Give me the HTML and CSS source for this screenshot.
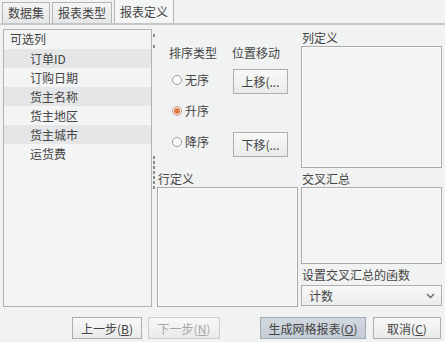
FILE: index.html
```html
<html>
<head>
    <meta charset="UTF-8">
    <title>报表定义</title>
    <link rel="stylesheet" href="styles.css">
</head>
<body>
<div class="tabs">
    <div class="tab">数据集</div>
    <div class="tab">报表类型</div>
    <div class="tab active">报表定义</div>
</div>
<div class="main">
    <div class="list">
        <div class="list-head">可选列</div>
        <div class="row alt">订单ID</div>
        <div class="row">订购日期</div>
        <div class="row alt">货主名称</div>
        <div class="row">货主地区</div>
        <div class="row alt">货主城市</div>
        <div class="row">运货费</div>
    </div>
    <div class="splitter">
        <div class="dots top"><i></i><i></i></div>
        <div class="dots bottom"><i></i><i></i><i></i><i></i><i></i><i></i><i></i></div>
    </div>
    <div class="col">
        <div class="sort-area">
            <div class="sort-col">
                <div class="head">排序类型</div>
                <div class="radios">
                    <label class="radio"><span class="dot"></span>无序</label>
                    <label class="radio"><span class="dot checked"></span>升序</label>
                    <label class="radio"><span class="dot"></span>降序</label>
                </div>
            </div>
            <div class="move-col">
                <div class="head">位置移动</div>
                <button class="btn small up">上移(...</button>
                <button class="btn small down">下移(...</button>
            </div>
        </div>
        <div class="label">行定义</div>
        <div class="box row-box"></div>
    </div>
    <div class="col right">
        <div class="label">列定义</div>
        <div class="box col-box"></div>
        <div class="label gap">交叉汇总</div>
        <div class="box cross-box"></div>
        <div class="label gap">设置交叉汇总的函数</div>
        <div class="select">
            <span>计数</span>
            <svg width="9" height="6" viewBox="0 0 9 6"><path d="M1 1 L4.5 4.5 L8 1" fill="none" stroke="#666" stroke-width="1.4"/></svg>
        </div>
    </div>
</div>
<div class="footer">
    <button class="btn">上一步(<u>B</u>)</button>
    <button class="btn disabled">下一步(<u>N</u>)</button>
    <button class="btn primary">生成网格报表(<u>O</u>)</button>
    <button class="btn cancel">取消(<u>C</u>)</button>
</div>
</body>
</html>
```
FILE: styles.css
```css
* {
    padding: 0;
    margin: 0;
    box-sizing: border-box;
}

body {
    width: 445px;
    height: 342px;
    overflow: hidden;
    background: #f1f2f2;
    font-family: "Noto Sans CJK SC", "Liberation Sans", sans-serif;
    font-size: 12px;
    color: #444;
}

.tabs {
    display: flex;
    align-items: flex-end;
    gap: 2px;
    height: 25px;
    padding-left: 2px;
    border-bottom: 2px solid #c3c7cb;
}

.tab {
    height: 21px;
    padding: 0 5px;
    line-height: 20px;
    border: 1px solid #b4b4b4;
    border-bottom: none;
    background: linear-gradient(#f5f5f5, #e5e6e6);
}

.tab.active {
    height: 24px;
    line-height: 23px;
    background: #f4f5f5;
}

.main {
    display: flex;
    height: 282px;
    padding: 4px 3px 0 3px;
}

.list {
    width: 149px;
    height: 278px;
    border: 1px solid #b2b2b2;
    background: #f3f4f4;
}

.list-head {
    height: 19px;
    line-height: 18px;
    padding-left: 6px;
}

.row {
    height: 19px;
    line-height: 19px;
    padding-left: 26px;
}

.row.alt {
    background: #e5e6e7;
}

.splitter {
    width: 5px;
    display: flex;
    flex-direction: column;
    padding-left: 1px;
}

.dots {
    display: flex;
    flex-direction: column;
}

.dots i {
    display: block;
    width: 2px;
    height: 3px;
    background: #8c8c8c;
}

.dots.top {
    margin-top: 5px;
    gap: 8px;
}

.dots.bottom {
    margin-top: 108px;
    gap: 2px;
}

.col {
    width: 141px;
    display: flex;
    flex-direction: column;
}

.col.right {
    margin-left: 3px;
}

.sort-area {
    display: flex;
    height: 141px;
    padding-left: 12px;
}

.head {
    height: 16px;
    line-height: 16px;
    margin-top: 16px;
}

.sort-col {
    width: 63px;
}

.radios {
    margin-top: 3px;
    padding-left: 3px;
}

.radio {
    display: flex;
    align-items: center;
    height: 31px;
    gap: 3px;
}

.dot {
    width: 10px;
    height: 10px;
    border-radius: 50%;
    border: 1px solid #9c9c9c;
    background: #fbfbfb;
    display: flex;
    align-items: center;
    justify-content: center;
}

.dot.checked {
    border-color: #c49a80;
}

.dot.checked::after {
    content: "";
    width: 6px;
    height: 6px;
    border-radius: 50%;
    background: #e07a44;
}

.move-col {
    display: flex;
    flex-direction: column;
    align-items: flex-start;
}

.btn {
    height: 22px;
    border: 1px solid #aeaeae;
    background: linear-gradient(#f8f8f8, #e9eaea);
    font-family: "Noto Sans CJK SC", "Liberation Sans", sans-serif;
    font-size: 12px;
    color: #444;
}

.btn.small {
    width: 55px;
    height: 25px;
    margin-left: 1px;
    white-space: nowrap;
    overflow: hidden;
}

.btn.up {
    margin-top: 8px;
}

.btn.down {
    margin-top: 38px;
}

.label {
    height: 17px;
    line-height: 17px;
    padding-left: 1px;
}

.label.gap {
    margin-top: 2px;
}

.box {
    border: 1px solid #a9a9a9;
    background: #f3f4f4;
    box-shadow: inset 0 0 0 1px #fafafa;
}

.row-box {
    height: 120px;
}

.col-box {
    height: 122px;
}

.cross-box {
    height: 77px;
}

.select {
    display: flex;
    align-items: center;
    justify-content: space-between;
    height: 21px;
    margin-top: 2px;
    padding: 0 6px 0 7px;
    border: 1px solid #aeaeae;
    background: linear-gradient(#f8f8f8, #ebecec);
}

.footer {
    display: flex;
    gap: 6px;
    padding: 10px 0 0 72px;
}

.footer .btn {
    width: 70px;
}

.btn.disabled {
    width: 72px;
    color: #a6a6a6;
    border-color: #cdcdcd;
}

.btn.primary {
    width: 106px;
    margin-left: 34px;
    background: linear-gradient(#d2d8e0, #c4ccd6);
    border-color: #a2aab4;
}

.btn.cancel {
    width: 68px;
    margin-left: 1px;
}
```
